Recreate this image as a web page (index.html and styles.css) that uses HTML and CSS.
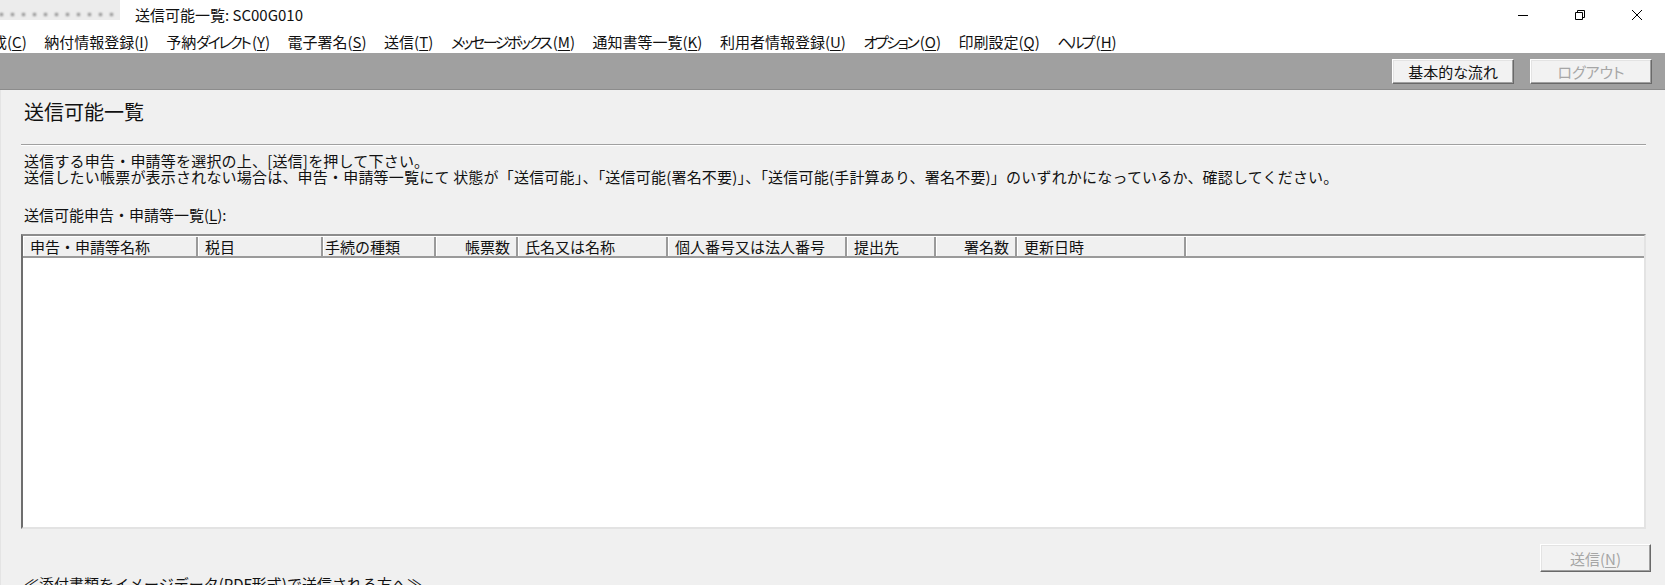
FILE: index.html
```html
<!DOCTYPE html>
<html lang="ja">
<head>
  <meta charset="utf-8">
  <title>送信可能一覧: SC00G010</title>
  <link rel="stylesheet" href="styles.css">
</head>
<body>
<div class="window">
  <div class="titlebar">
    <div class="appname"><span class="blur"></span></div>
    <div class="title">送信可能一覧: SC00G010</div>
    <div class="winctl">
      <span class="ctl">
        <svg width="12" height="12" viewBox="0 0 12 12"><path d="M1 6.5h10" stroke="#000" stroke-width="1" fill="none"/></svg>
      </span>
      <span class="ctl">
        <svg width="12" height="12" viewBox="0 0 12 12"><path d="M1.5 3.5h7v7h-7z M3.5 3.5v-2h7v7h-2" stroke="#000" stroke-width="1" fill="none"/></svg>
      </span>
      <span class="ctl">
        <svg width="12" height="12" viewBox="0 0 12 12"><path d="M1 1l10 10M11 1L1 11" stroke="#000" stroke-width="1" fill="none"/></svg>
      </span>
    </div>
  </div>

  <div class="menubar">
    <span class="menu first">成(<u>C</u>)</span>
    <span class="menu">納付情報登録(<u>I</u>)</span>
    <span class="menu">予納<span class="kana">ダイレクト</span>(<u>Y</u>)</span>
    <span class="menu">電子署名(<u>S</u>)</span>
    <span class="menu">送信(<u>T</u>)</span>
    <span class="menu"><span class="kana">メッセージボックス</span>(<u>M</u>)</span>
    <span class="menu">通知書等一覧(<u>K</u>)</span>
    <span class="menu">利用者情報登録(<u>U</u>)</span>
    <span class="menu"><span class="kana">オプション</span>(<u>O</u>)</span>
    <span class="menu">印刷設定(<u>Q</u>)</span>
    <span class="menu"><span class="kana">ヘルプ</span>(<u>H</u>)</span>
  </div>

  <div class="toolbar">
    <button class="btn">基本的な流れ</button>
    <button class="btn disabled">ログアウト</button>
  </div>

  <div class="content">
    <h1 class="heading">送信可能一覧</h1>
    <div class="rule"></div>
    <p class="guide">送信する申告・申請等を選択の上、[送信]を押して下さい。<br>送信したい帳票が表示されない場合は、申告・申請等一覧にて 状態が「送信可能」、「送信可能(署名不要)」、「送信可能(手計算あり、署名不要)」のいずれかになっているか、確認してください。</p>
    <div class="label">送信可能申告・申請等一覧(<u>L</u>):</div>

    <div class="list">
      <div class="list-head">
        <div class="col c1">申告・申請等名称</div>
        <div class="col c2">税目</div>
        <div class="col c3">手続の種類</div>
        <div class="col c4 num">帳票数</div>
        <div class="col c5">氏名又は名称</div>
        <div class="col c6">個人番号又は法人番号</div>
        <div class="col c7">提出先</div>
        <div class="col c8 num">署名数</div>
        <div class="col c9">更新日時</div>
        <div class="col rest"></div>
      </div>
      <div class="list-body"></div>
    </div>

    <div class="actions">
      <button class="btn send disabled">送信(<u>N</u>)</button>
    </div>
    <div class="note">≪添付書類をイメージデータ(PDF形式)で送信される方へ≫</div>
  </div>
</div>
</body>
</html>
```

FILE: styles.css
```css
html, body{
  margin:0;
  padding:0;
  overflow:hidden;
}

body{
  font-family:"Noto Sans CJK JP", sans-serif;
  font-size:15px;
  color:#111;
  background:#f0f0f0;
}

u{
  text-decoration-thickness:1px;
  text-underline-offset:2px;
}

.window{
  width:1665px;
  height:585px;
  overflow:hidden;
}

/* title bar */
.titlebar{
  height:30px;
  background:#fff;
  display:flex;
  align-items:center;
}

.appname{
  width:120px;
  height:20px;
  align-self:flex-start;
  background:#ececec;
}

.blur{
  display:block;
  margin:13px 6px 0 0;
  height:3px;
  background:repeating-linear-gradient(90deg, #8a8a8a 0 3px, transparent 3px 11px);
  filter:blur(0.8px);
}

.title{
  margin-left:15px;
  line-height:30px;
}

.winctl{
  margin-left:auto;
  display:flex;
  height:30px;
}

.ctl{
  width:57px;
  display:flex;
  align-items:center;
  justify-content:center;
}

/* menu */
.menubar{
  height:23px;
  background:#fff;
  display:flex;
  align-items:center;
  gap:17.5px;
  white-space:nowrap;
  overflow:hidden;
  font-feature-settings:"palt";
}

.menu{
  line-height:22px;
}

.menu.first{
  margin-left:-8px;
}

.kana{
  letter-spacing:-2.4px;
  margin-right:2.4px;
}

/* gray tool bar */
.toolbar{
  height:36px;
  background:#a0a0a0;
  border-bottom:1px solid #8c8c8c;
  display:flex;
  align-items:center;
  justify-content:flex-end;
  gap:16px;
  padding-right:13px;
}

.btn{
  font-family:inherit;
  font-feature-settings:"palt";
  font-size:15px;
  width:122px;
  height:25px;
  padding:0;
  background:#f2f2f2;
  color:#111;
  border:1px solid;
  border-color:#fff #696969 #696969 #fff;
  box-shadow:inset -1px -1px 0 #a0a0a0, inset 1px 1px 0 #e3e3e3;
}

.btn.disabled{
  color:#a6a6a6;
}

/* content */
.content{
  background:#f0f0f0;
  padding:9px 19px 0 20px;
  height:496px;
  border-left:1px solid #e4e4e4;
}

.heading{
  margin:0 0 0 3px;
  font-size:20px;
  font-weight:normal;
  line-height:26px;
}

.rule{
  margin-top:19px;
  height:1px;
  background:#a0a0a0;
  border-bottom:1px solid #fff;
}

.guide{
  margin:7px 0 0 3px;
  line-height:16px;
  letter-spacing:0.2px;
  white-space:nowrap;
}

.label{
  margin:22px 0 0 3px;
  line-height:16px;
}

.list{
  margin-top:11px;
  height:295px;
  box-sizing:border-box;
  border:2px solid;
  border-color:#8c8c8c #e3e3e3 #e3e3e3 #6e6e6e;
  background:#fff;
  display:flex;
  flex-direction:column;
}

.list-head{
  display:flex;
  height:19px;
  background:#f0f0f0;
  border-bottom:2px solid #9a9a9a;
  border-top:1px solid #fff;
}

.col{
  box-sizing:border-box;
  border-right:2px solid #9a9a9a;
  box-shadow:inset 1px 0 0 #fff;
  padding:0 6px 0 7px;
  line-height:19px;
  white-space:nowrap;
}

.col.num{
  text-align:right;
}

.c1{ width:175px; }
.c2{ width:125px; }
.c3{ width:113px; padding-left:2px; }
.c4{ width:82px; }
.c5{ width:150px; }
.c6{ width:179px; }
.c7{ width:89px; }
.c8{ width:81px; }
.c9{ width:169px; }

.col.rest{
  flex:1;
  border-right:0;
}

.list-body{
  flex:1;
}

.actions{
  display:flex;
  justify-content:flex-end;
  margin:15px -5px 0 0;
}

.btn.send{
  width:111px;
  height:28px;
}

.note{
  margin:4px 0 0 3px;
  line-height:16px;
  white-space:nowrap;
}
```
